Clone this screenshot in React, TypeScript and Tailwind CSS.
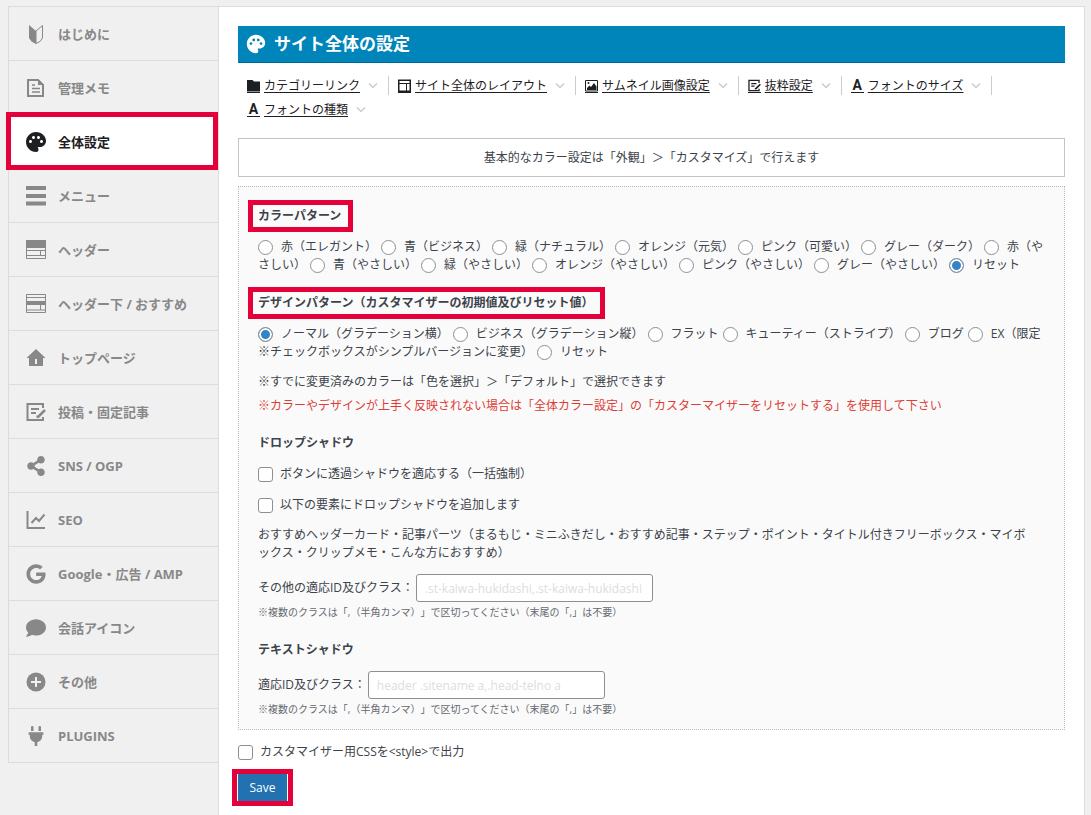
import type { ReactNode } from "react";
import { FaComment, FaGoogle, FaPlug, FaShareAlt } from "react-icons/fa";
import { MdPalette } from "react-icons/md";

const BeginnerIcon = () => (
  <svg viewBox="0 0 20 20" className="size-5" fill="none" stroke="currentColor">
    <path d="M3 1l7 6v13l-4.500-2.500L3 14z" fill="currentColor" stroke="none" />
    <path d="M10 7l6.500-5.500V14L14 17.500 10 19.500z" strokeWidth="1" />
  </svg>
);

const MemoIcon = () => (
  <svg viewBox="0 0 20 20" className="size-5" fill="none" stroke="currentColor" strokeWidth="2">
    <path d="M2 2h10l5 5v11H2z" />
    <path d="M12 1v6h6z" fill="currentColor" stroke="none" />
    <path d="M6 7h3M6 10.500h8M6 14h8" strokeWidth="1.500" />
  </svg>
);

const BarsIcon = () => (
  <svg viewBox="0 0 20 20" className="size-5" fill="currentColor">
    <path d="M0 0h20v4H0zM0 8h20v4H0zM0 15.500h20v4H0z" />
  </svg>
);

const HeaderIcon = () => (
  <svg viewBox="0 0 20 20" className="size-5" fill="none" stroke="currentColor">
    <path d="M0 0h20v8H0z" fill="currentColor" stroke="none" />
    <path d="M.5 8v10.500h19V8M0 10.500h20M0 15.500h20M14.500 10.500v5" />
  </svg>
);

const UnderHeaderIcon = () => (
  <svg viewBox="0 0 20 20" className="size-5" fill="none" stroke="currentColor">
    <path d="M0 7h20v4H0z" fill="currentColor" stroke="none" />
    <path d="M.5.5h19v18H.5zM0 3.500h20M0 16h20M14.500 11v5" />
  </svg>
);

const HomeIcon = () => (
  <svg viewBox="0 0 20 20" className="size-5" fill="currentColor">
    <path fillRule="evenodd" d="M10 1l9.500 9H17v8H3v-8H.5zM9 11v5h2v-5z" />
  </svg>
);

const PostIcon = ({ className = "size-5" }: { className?: string }) => (
  <svg viewBox="0 0 20 20" className={className} fill="none" stroke="currentColor" strokeWidth="2">
    <path d="M17 6V2H1.500v16H17v-3" />
    <path d="M5 7h8M5 11h5" />
    <path d="M19 8l-6.500 6.500-2 .5" strokeWidth="2.500" />
  </svg>
);

const ChartIcon = () => (
  <svg viewBox="0 0 20 20" className="size-5" fill="none" stroke="currentColor" strokeWidth="2">
    <path d="M1.500 1v17H19" />
    <path d="M5.500 13l4.500-5 3 3 5.500-6.500" />
  </svg>
);

const PlusIcon = () => (
  <svg viewBox="0 0 20 20" className="size-5">
    <circle cx="10" cy="10" r="9.500" fill="currentColor" />
    <path d="M10 5v10M5 10h10" stroke="#f0f0f1" strokeWidth="2" />
  </svg>
);

const FolderIcon = () => (
  <svg viewBox="0 0 13 13" className="size-[13px]" fill="currentColor">
    <path d="M0 1h5.500l1.500 1.500H13v10H0z" />
  </svg>
);

const LayoutIcon = () => (
  <svg viewBox="0 0 13 13" className="size-[13px]" fill="none" stroke="currentColor">
    <path d="M.75 1.250h11.500v11H.75z" strokeWidth="1.500" />
    <path d="M0 4.500h13M8.500 4.500v8" />
  </svg>
);

const ImageIcon = () => (
  <svg viewBox="0 0 13 13" className="size-[13px]">
    <path d="M.5 1.500h12v10.500H.5z" fill="none" stroke="currentColor" />
    <path d="M2 11V9l2.500-2.500L6 8l3-4 2.500 3.500V11z" fill="currentColor" />
    <circle cx="3.500" cy="4" r="1" fill="currentColor" />
  </svg>
);

const LetterIcon = () => (
  <span className="font-[Roboto,sans-serif] text-[14px] leading-3 font-bold" aria-hidden="true">
    A
  </span>
);

const Chevron = () => (
  <svg viewBox="0 0 10 10" className="size-2.5" fill="none" stroke="#ccc" strokeWidth="1.500">
    <path d="M1 2.500l4 4 4-4" />
  </svg>
);

const menu: { label: string; icon: ReactNode; active?: boolean }[] = [
  { label: "はじめに", icon: <BeginnerIcon /> },
  { label: "管理メモ", icon: <MemoIcon /> },
  { label: "全体設定", icon: <MdPalette size={24} className="shrink-0" />, active: true },
  { label: "メニュー", icon: <BarsIcon /> },
  { label: "ヘッダー", icon: <HeaderIcon /> },
  { label: "ヘッダー下 / おすすめ", icon: <UnderHeaderIcon /> },
  { label: "トップページ", icon: <HomeIcon /> },
  { label: "投稿・固定記事", icon: <PostIcon /> },
  { label: "SNS / OGP", icon: <FaShareAlt size={20} /> },
  { label: "SEO", icon: <ChartIcon /> },
  { label: "Google・広告 / AMP", icon: <FaGoogle size={20} /> },
  { label: "会話アイコン", icon: <FaComment size={20} /> },
  { label: "その他", icon: <PlusIcon /> },
  { label: "PLUGINS", icon: <FaPlug size={20} /> },
];

const anchors: { label: string; icon: ReactNode }[] = [
  { label: "カテゴリーリンク", icon: <FolderIcon /> },
  { label: "サイト全体のレイアウト", icon: <LayoutIcon /> },
  { label: "サムネイル画像設定", icon: <ImageIcon /> },
  { label: "抜粋設定", icon: <PostIcon className="size-[13px]" /> },
  { label: "フォントのサイズ", icon: <LetterIcon /> },
  { label: "フォントの種類", icon: <LetterIcon /> },
];

const colors = [
  "赤（エレガント）",
  "青（ビジネス）",
  "緑（ナチュラル）",
  "オレンジ（元気）",
  "ピンク（可愛い）",
  "グレー（ダーク）",
  "赤（やさしい）",
  "青（やさしい）",
  "緑（やさしい）",
  "オレンジ（やさしい）",
  "ピンク（やさしい）",
  "グレー（やさしい）",
  "リセット",
];

const designs = [
  "ノーマル（グラデーション横）",
  "ビジネス（グラデーション縦）",
  "フラット",
  "キューティー（ストライプ）",
  "ブログ",
  "EX（限定※チェックボックスがシンプルバージョンに変更）",
  "リセット",
];

const RadioList = ({ name, options, selected }: { name: string; options: string[]; selected: string }) => (
  <div className="mt-[13px]" role="radiogroup">
    {options.map((o) => (
      <label key={o} className="mr-1">
        <input
          type="radio"
          name={name}
          defaultChecked={o === selected}
          className="mr-2 inline-block size-[15px] appearance-none rounded-full border border-[#8c8f94] bg-white align-middle checked:bg-[#3582c4] checked:shadow-[inset_0_0_0_2px_#fff]"
        />
        {o}
      </label>
    ))}
  </div>
);

const Check = ({ label }: { label: string }) => (
  <label className="mt-[13px] flex items-center gap-[7px]">
    <input
      type="checkbox"
      className="size-[15px] appearance-none rounded-[3px] border border-[#8c8f94] bg-white checked:bg-[#3582c4]"
    />
    {label}
  </label>
);

const Heading = ({ children, marked }: { children: ReactNode; marked?: boolean }) => (
  <h3 className="relative w-fit font-bold">
    {children}
    {marked && <span className="absolute -inset-y-[7px] -right-3 -left-2.5 border-5 border-[#e60039]" />}
  </h3>
);

const TextField = ({ id, label, placeholder }: { id: string; label: string; placeholder: string }) => (
  <>
    <div className="mt-3 flex items-center gap-0.5">
      <label htmlFor={id}>{label}</label>
      <input
        id={id}
        type="text"
        placeholder={placeholder}
        className="h-7 w-[237px] rounded-[3px] border border-[#8c8f94] bg-white px-2 placeholder:text-[#ddd]"
      />
    </div>
    <p className="mt-px text-[10px] leading-[18px] text-[#646970]">
      ※複数のクラスは「,（半角カンマ）」で区切ってください（末尾の「,」は不要）
    </p>
  </>
);

const App = () => {
  return (
    <div
      lang="ja"
      className="flex min-h-screen bg-[#f0f0f1] pt-1.5 pr-1.5 pl-2 font-['Open_Sans','Noto_Sans_CJK_JP',sans-serif] text-[12px] leading-[18px] text-[#3c434a] [text-spacing-trim:space-all]"
    >
      <nav className="w-[210px] shrink-0">
        <ul className="border-t border-l border-[#dcdcde]">
          {menu.map((m) => (
            <li key={m.label} className="relative">
              <a
                href="#"
                className={`flex h-[54px] items-center gap-3 border-b border-[#dcdcde] pl-[17px] text-[13px] font-bold ${
                  m.active ? "bg-white text-[#1d2023]" : "text-[#888]"
                }`}
              >
                <span className="flex w-5 shrink-0 justify-center">{m.icon}</span>
                {m.label}
              </a>
              {m.active && (
                <span className="pointer-events-none absolute -top-[3px] right-0 -bottom-px -left-[3px] border-5 border-[#e60039]" />
              )}
            </li>
          ))}
        </ul>
      </nav>

      <main className="min-w-0 flex-1 border-x border-t border-[#dcdcde] bg-white px-[19px] pt-[19px] pb-2">
        <h2 className="flex h-[37px] items-center gap-[7px] border-b border-[#006799] bg-[#0085ba] pl-[7px] text-[17px] font-bold text-white">
          <MdPalette size={22} />
          サイト全体の設定
        </h2>

        <ul className="mt-[13px] flex flex-wrap gap-y-[5px] text-[#1d2023]">
          {anchors.map((a) => (
            <li key={a.label} className="flex h-[19px] items-center border-r border-[#ccc] pr-2.5 pl-[9px] last:border-0">
              <a href="#" className="flex items-center gap-1">
                <span className="flex h-3.5 w-[13px] items-center justify-center border-b border-current">{a.icon}</span>
                <span className="underline underline-offset-2">{a.label}</span>
              </a>
              <span className="ml-2">
                <Chevron />
              </span>
            </li>
          ))}
        </ul>

        <p className="mt-[19px] flex min-h-[39px] items-center justify-center border border-[#c3c4c7]">
          基本的なカラー設定は「外観」＞「カスタマイズ」で行えます
        </p>

        <form>
          <div className="mt-[9px] border border-dotted border-[#bbb] bg-[#fafafa] px-[19px] pt-5 pb-[11px]">
            <Heading marked>カラーパターン</Heading>
            <RadioList name="color" options={colors} selected="リセット" />

            <div className="mt-5">
              <Heading marked>デザインパターン（カスタマイザーの初期値及びリセット値）</Heading>
              <RadioList name="design" options={designs} selected="ノーマル（グラデーション横）" />
            </div>
            <p className="mt-3">※すでに変更済みのカラーは「色を選択」＞「デフォルト」で選択できます</p>
            <p className="mt-1.5 text-[#dd3d36]">
              ※カラーやデザインが上手く反映されない場合は「全体カラー設定」の「カスターマイザーをリセットする」を使用して下さい
            </p>

            <div className="mt-[19px]">
              <Heading>ドロップシャドウ</Heading>
              <Check label="ボタンに透過シャドウを適応する（一括強制）" />
              <Check label="以下の要素にドロップシャドウを追加します" />
              <p className="mt-3 pr-4">
                おすすめヘッダーカード・記事パーツ（まるもじ・ミニふきだし・おすすめ記事・ステップ・ポイント・タイトル付きフリーボックス・マイボックス・クリップメモ・こんな方におすすめ）
              </p>
              <TextField
                id="shadow-class"
                label="その他の適応ID及びクラス："
                placeholder=".st-kaiwa-hukidashi,.st-kaiwa-hukidashi"
              />
            </div>

            <div className="mt-5">
              <Heading>テキストシャドウ</Heading>
              <TextField id="text-class" label="適応ID及びクラス：" placeholder="header .sitename a,.head-telno a" />
            </div>
          </div>

          <Check label="カスタマイザー用CSSを<style>で出力" />
          <div className="relative mt-[13px] w-fit">
            <button type="submit" className="block h-[27px] w-[49px] bg-[#2271b1] text-white">
              Save
            </button>
            <span className="pointer-events-none absolute -inset-x-1.5 -inset-y-[5px] border-5 border-[#e60039]" />
          </div>
        </form>
      </main>
    </div>
  );
};

export default App;
